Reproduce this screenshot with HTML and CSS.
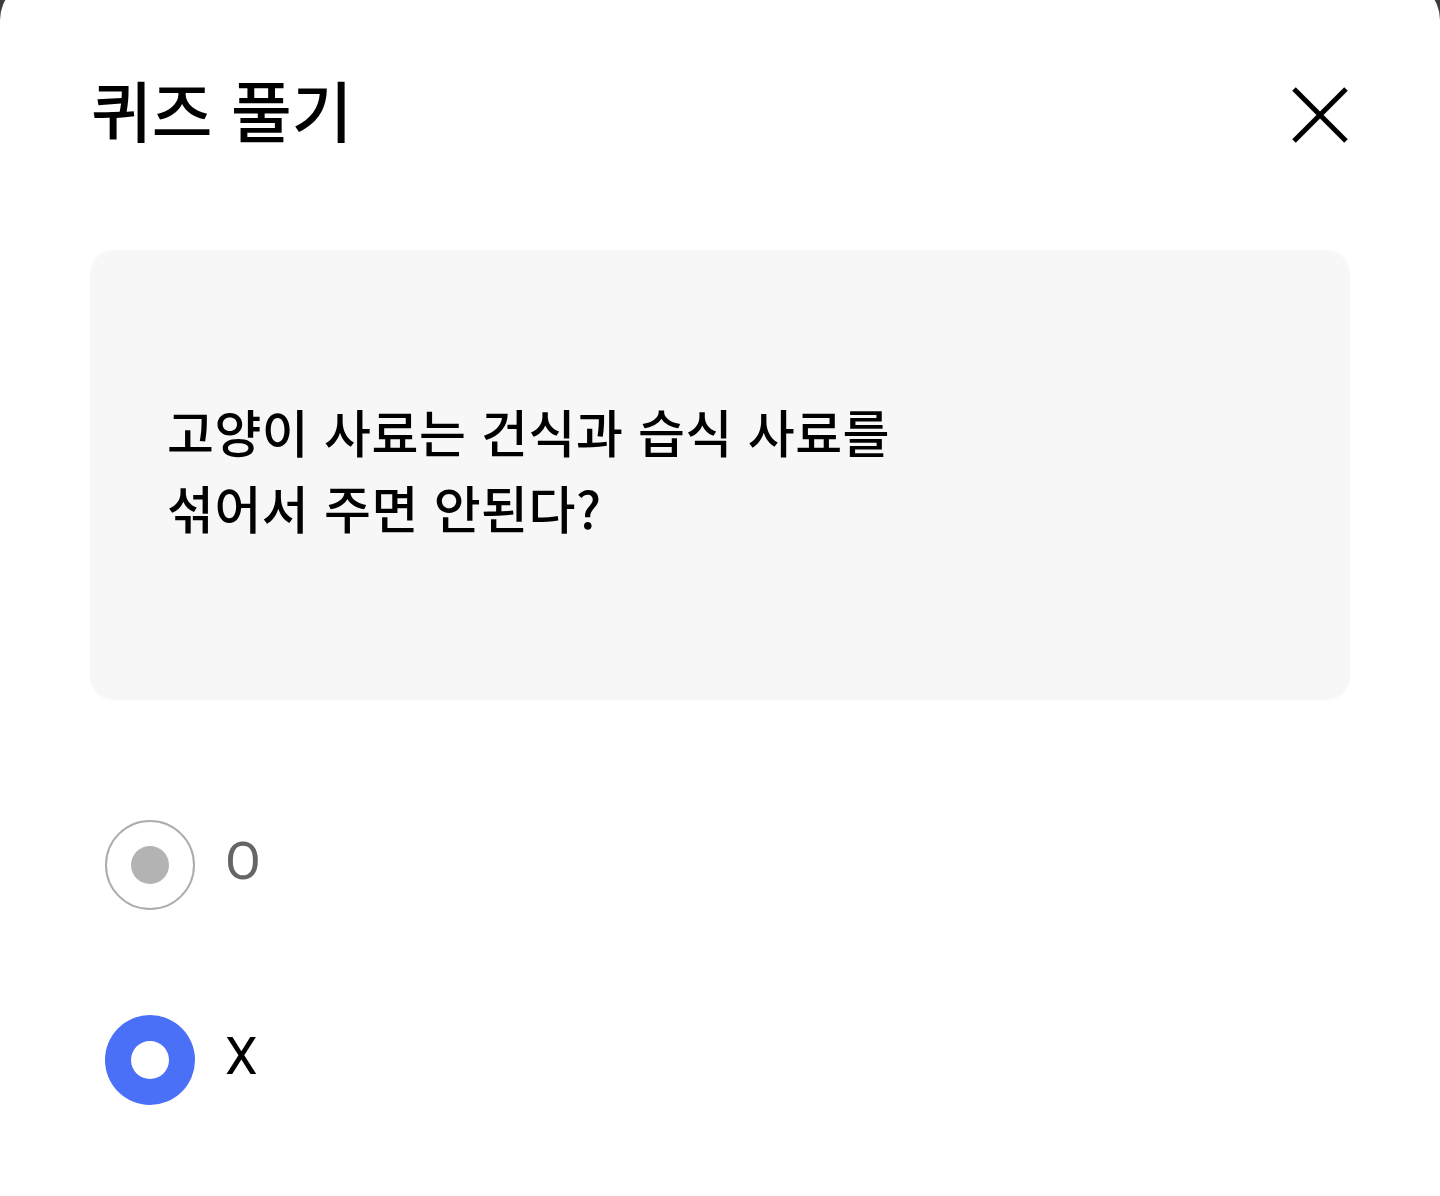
FILE: index.html
```html
<!DOCTYPE html>
<html lang="ko">
<head>
<meta charset="utf-8">
<title>퀴즈 풀기</title>
<link rel="stylesheet" href="styles.css">
</head>
<body>
<div class="sheet">
  <header class="header">
    <h1 class="title">퀴즈 풀기</h1>
    <button class="close" aria-label="닫기">
      <svg width="56" height="56" viewBox="0 0 56 56"><path d="M2 2 L54 54 M54 2 L2 54" stroke="#000" stroke-width="5" fill="none"/></svg>
    </button>
  </header>
  <div class="card">
    <p class="question">고양이 사료는 건식과 습식 사료를<br>섞어서 주면 안된다?</p>
  </div>
  <div class="options">
    <label class="option">
      <span class="radio radio-off"><span class="dot"></span></span>
      <span class="label label-off">O</span>
    </label>
    <label class="option">
      <span class="radio radio-on"><span class="dot"></span></span>
      <span class="label">X</span>
    </label>
  </div>
</div>
</body>
</html>
```
FILE: styles.css
```css
html, body {
  margin: 0;
  padding: 0;
  background: #3d3d3d;
  overflow: hidden;
}
.sheet {
  margin-top: -20px;
  padding: 20px 90px 0;
  background: #fff;
  border-radius: 40px 40px 0 0;
  height: 1240px;
  box-sizing: border-box;
  font-family: "Noto Sans CJK KR", "Noto Sans", sans-serif;
}
.header {
  display: flex;
  align-items: center;
  justify-content: space-between;
  height: 230px;
  box-sizing: border-box;
  margin-top: -3px;
}
.title {
  margin: -8px 0 0;
  font-size: 66px;
  font-weight: 500;
  line-height: 80px;
  color: #000;
  padding-left: 1px;
}
.close {
  border: 0;
  background: none;
  padding: 0;
  margin: 5px 2px 0 0;
  width: 56px;
  height: 56px;
  display: block;
}
.close svg { display: block; }
.card {
  margin-top: 23px;
  height: 450px;
  background: #f7f7f7;
  border-radius: 24px;
  display: flex;
  align-items: center;
  padding-left: 77px;
  box-sizing: border-box;
}
.question {
  margin: -12px 0 0;
  font-size: 51px;
  font-weight: 500;
  line-height: 76px;
  color: #000;
  letter-spacing: 0.5px;
}
.options {
  display: flex;
  flex-direction: column;
  gap: 105px;
  margin-top: 120px;
  padding-left: 15px;
}
.option {
  display: flex;
  align-items: center;
  gap: 32px;
  height: 90px;
}
.radio {
  width: 90px;
  height: 90px;
  border-radius: 50%;
  box-sizing: border-box;
  display: flex;
  align-items: center;
  justify-content: center;
  flex: none;
}
.radio-off {
  border: 2.5px solid #adadad;
}
.radio-off .dot {
  width: 38px;
  height: 38px;
  border-radius: 50%;
  background: #b3b3b3;
}
.radio-on {
  background: #4a70f7;
}
.radio-on .dot {
  width: 38px;
  height: 38px;
  border-radius: 50%;
  background: #fff;
}
.label {
  font-family: Roboto, "Noto Sans", sans-serif;
  font-size: 52px;
  line-height: 60px;
  color: #000;
  margin-top: -6px;
  margin-left: -2px;
}
.label-off {
  color: #666;
}
```
